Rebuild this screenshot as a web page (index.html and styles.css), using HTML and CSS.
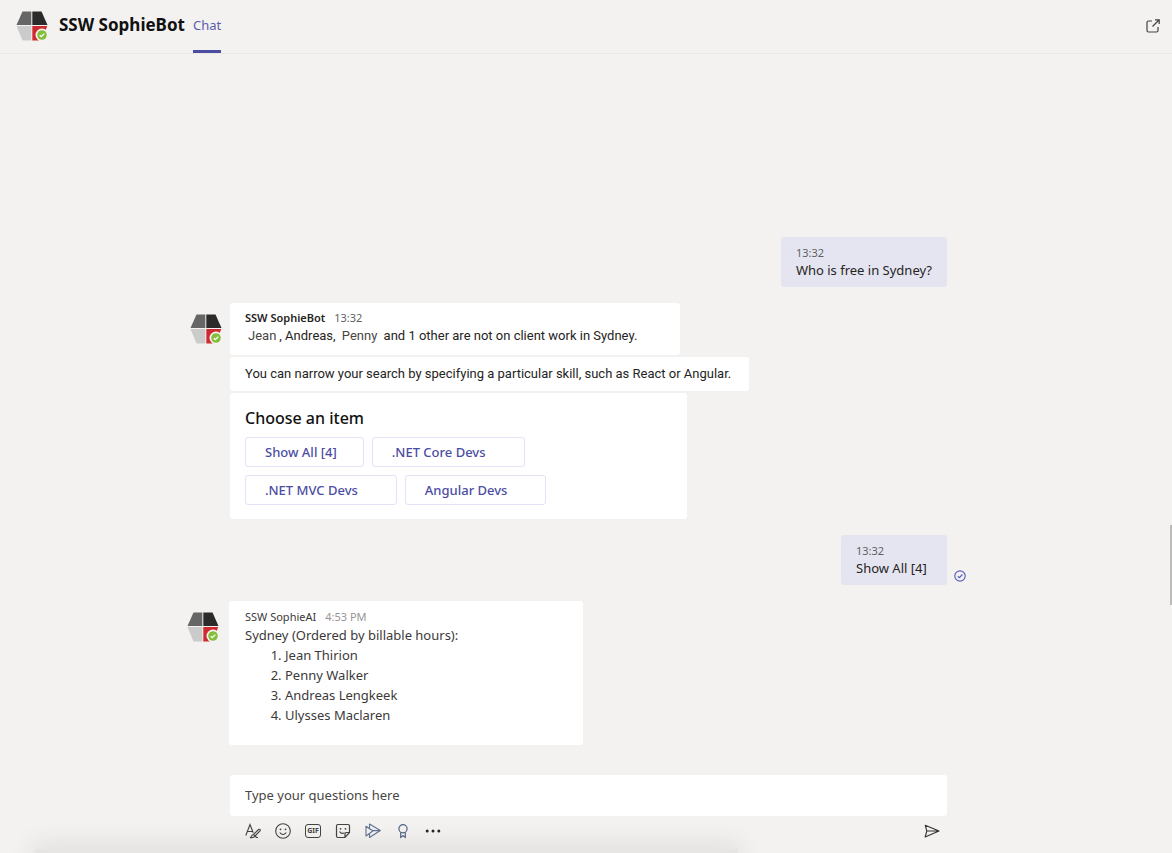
FILE: index.html
```
<!DOCTYPE html>
<html lang="en">
<head>
  <meta charset="UTF-8" />
  <meta name="viewport" content="width=device-width, initial-scale=1.0"/>
  <title>SSW SophieBot</title>
  <link rel="stylesheet" href="styles.css">
</head>
<body>
  <!-- Shared bot logo -->
  <svg class="defs" width="0" height="0" aria-hidden="true">
    <symbol id="bot-logo" viewBox="0 0 32 30">
      <path fill="#666" d="M6.500 .5H15.300V14H.500z"/>
      <path fill="#2b2b2b" d="M16.300 .5H25.500L31.500 14H16.300z"/>
      <path fill="#cbcbcb" d="M.5 15H15.300V29.500H6.500z"/>
      <path fill="#cf2a30" d="M16.300 15H31.200L26 29.500H16.300z"/>
      <circle cx="26" cy="24" r="6.500" fill="#f6f5f4"/>
      <circle cx="26" cy="24" r="4.800" fill="#83bf3c"/>
      <path d="M23.700 24.200l1.600 1.500 3-3.100" fill="none" stroke="#fff" stroke-width="1.300"/>
    </symbol>
  </svg>

  <header class="topbar">
    <svg class="logo" role="img" aria-label="SSW SophieBot"><use href="#bot-logo"/></svg>
    <h1>SSW SophieBot</h1>
    <nav class="tabs">
      <a class="tab" href="#chat">Chat</a>
    </nav>
    <button class="icon-btn popout" aria-label="Pop out chat">
      <svg width="16" height="16" viewBox="0 0 16 16" fill="none" stroke="#424242" stroke-width="1.200">
        <path d="M7 3H3.500Q2 3 2 4.500v8Q2 14 3.500 14h8q1.500 0 1.500-1.500V9"/>
        <path d="M7.500 8.500L14 2M10 1.800h4.200V6"/>
      </svg>
    </button>
  </header>

  <main class="chat" id="chat">
    <div class="row mine">
      <div class="bubble sent">
        <time>13:32</time>
        <p>Who is free in Sydney?</p>
      </div>
    </div>

    <div class="row">
      <svg class="logo avatar" role="img" aria-label="SSW SophieBot"><use href="#bot-logo"/></svg>
      <div class="stack">
        <div class="bubble answer">
          <div class="meta"><strong>SSW SophieBot</strong><time>13:32</time></div>
          <p><span class="person">Jean</span>, Andreas, <span class="person">Penny</span> and 1 other are not on client work in Sydney.</p>
        </div>
        <div class="bubble hint">
          <p>You can narrow your search by specifying a particular skill, such as React or Angular.</p>
        </div>
        <div class="bubble card">
          <h2>Choose an item</h2>
          <div class="choices">
            <button class="choice">Show All [4]</button>
            <button class="choice wide">.NET Core Devs</button>
            <button class="choice wide">.NET MVC Devs</button>
            <button class="choice wide">Angular Devs</button>
          </div>
        </div>
      </div>
    </div>

    <div class="row mine">
      <div class="bubble sent">
        <time>13:32</time>
        <p>Show All [4]</p>
      </div>
      <svg class="receipt" width="12" height="12" viewBox="0 0 12 12" fill="none" stroke="#5b5fc0" stroke-width="1.200" role="img" aria-label="Sent">
        <circle cx="6" cy="6" r="5.200"/>
        <path d="M3.800 6.200l1.600 1.500 3-3.200"/>
      </svg>
    </div>

    <div class="row latest">
      <svg class="logo avatar" role="img" aria-label="SSW SophieAI"><use href="#bot-logo"/></svg>
      <div class="bubble result">
        <div class="meta"><span>SSW SophieAI</span><time>4:53 PM</time></div>
        <p>Sydney (Ordered by billable hours):</p>
        <ol>
          <li>Jean Thirion</li>
          <li>Penny Walker</li>
          <li>Andreas Lengkeek</li>
          <li>Ulysses Maclaren</li>
        </ol>
      </div>
    </div>
  </main>

  <footer class="composer">
    <div class="composer-inner">
      <input type="text" class="message" aria-label="Message" placeholder="Type your questions here" />
      <div class="toolbar">
        <button class="icon-btn" aria-label="Format">
          <svg width="16" height="16" viewBox="0 0 16 16" fill="none" stroke="#424242" stroke-width="1.100">
            <path d="M.8 12.500L5 1.500l3.200 8.300M2.400 8.500h5.200"/>
            <path d="M8.500 11.500l5-5q.8-.6 1.500 0 .6.800 0 1.500l-5 5M8.500 11.500q-1.800.2-2 1.700-.4 1.200-1.500 1.500 4 .6 5-1.700zM10 13l1.500 1.500h1.500"/>
          </svg>
        </button>
        <button class="icon-btn" aria-label="Emoji">
          <svg width="16" height="16" viewBox="0 0 16 16" fill="none" stroke="#424242" stroke-width="1.100">
            <circle cx="8" cy="8" r="7.300"/>
            <path d="M4.700 9.500q3.300 4 6.600 0"/>
            <circle cx="5.500" cy="6.300" r=".9" fill="#424242" stroke="none"/>
            <circle cx="10.500" cy="6.300" r=".9" fill="#424242" stroke="none"/>
          </svg>
        </button>
        <button class="icon-btn gif" aria-label="GIF"><span>GIF</span></button>
        <button class="icon-btn" aria-label="Sticker">
          <svg width="16" height="16" viewBox="0 0 16 16" fill="none" stroke="#424242" stroke-width="1.200">
            <path d="M3 1.500h10q1.500 0 1.500 1.500v6.500L10 14.500H3Q1.500 14.500 1.500 13V3Q1.500 1.500 3 1.500zM14.500 9.500H11.500Q10 9.500 10 11v3.500"/>
            <path d="M4.500 8.500q2 3 5 1.300"/>
            <circle cx="5.500" cy="5.800" r=".9" fill="#424242" stroke="none"/>
            <circle cx="10.500" cy="5.800" r=".9" fill="#424242" stroke="none"/>
          </svg>
        </button>
        <button class="icon-btn" aria-label="Stream">
          <svg width="16" height="16" viewBox="0 0 16 16" fill="none" stroke="#60708f" stroke-width="1.100" stroke-linejoin="round">
            <path d="M4.500 1L15.300 7.500 4.500 14.500V10.500L1 13V3.200l3.500 2.500z"/>
            <path d="M4.500 5.700L8 7.800l-3.500 2.700M8 7.600h7"/>
          </svg>
        </button>
        <button class="icon-btn" aria-label="Praise">
          <svg width="16" height="16" viewBox="0 0 16 16" fill="none" stroke="#506384" stroke-width="1.200">
            <circle cx="8" cy="5.800" r="4.100"/>
            <path d="M5.700 9.300v5L8 12.700l2.300 1.600v-5"/>
          </svg>
        </button>
        <button class="icon-btn" aria-label="More options">
          <svg width="16" height="16" viewBox="0 0 16 16" fill="#242424">
            <circle cx="2.200" cy="8" r="1.500"/><circle cx="8" cy="8" r="1.500"/><circle cx="13.800" cy="8" r="1.500"/>
          </svg>
        </button>
        <button class="icon-btn send" aria-label="Send">
          <svg width="16" height="16" viewBox="0 0 16 16" fill="none" stroke="#333" stroke-width="1.100" stroke-linejoin="round">
            <path d="M1.200 2.200L15 8 1.200 14 2.800 8zM2.800 8H15"/>
          </svg>
        </button>
      </div>
    </div>
  </footer>
  <div class="scroll-thumb"></div>
</body>
</html>
```

FILE: styles.css
```
:root {
  --bg: #f3f2f1;
  --white: #ffffff;
  --text: #252423;
  --muted: #616161;
  --primary: #4b4da3;
  --sent: #e5e5f1;
  --outline: #e3e2f6;
}

* {
  box-sizing: border-box;
}

body {
  display: flex;
  flex-direction: column;
  position: relative;
  min-height: 100vh;
  margin: 0;
  overflow-x: hidden;
  background-color: var(--bg);
  color: var(--text);
  font-family: 'Segoe UI', 'Noto Sans', sans-serif;
  font-size: 13px;
  line-height: 18px;
}

h1, h2, p, ol {
  margin: 0;
}

button, input {
  font-family: inherit;
}

.defs {
  position: absolute;
}

.logo {
  flex: none;
  width: 32px;
  height: 30px;
}

/* Header */
.topbar {
  display: flex;
  align-items: center;
  height: 54px;
  padding: 0 11px 2px 16px;
  border-bottom: 1px solid #e9e8e7;
}

.topbar h1 {
  margin: 0 8px 2px 11px;
  color: #111;
  font-size: 17px;
  font-weight: 700;
  line-height: 24px;
}

.tabs {
  align-self: stretch;
  display: flex;
  margin-bottom: -2px;
}

.tab {
  padding-top: 16px;
  border-bottom: 3px solid var(--primary);
  color: #5b5dab;
  text-decoration: none;
}

.icon-btn {
  display: flex;
  align-items: center;
  justify-content: center;
  width: 16px;
  height: 16px;
  padding: 0;
  border: none;
  background: none;
  cursor: pointer;
}

.popout {
  margin-left: auto;
}

/* Messages */
.chat {
  flex: 1;
  display: flex;
  flex-direction: column;
  justify-content: flex-end;
  gap: 16px;
  padding: 24px 36px 30px 16px;
}

.row {
  display: flex;
  align-items: flex-start;
  width: 100%;
  max-width: 780px;
  margin: 0 auto;
  padding: 0 19px 0 4px;
}

.avatar {
  margin: 11px 8px 0 0;
}

.mine {
  position: relative;
  justify-content: flex-end;
}

.latest {
  padding-left: 1px;
}

.latest .avatar {
  margin-right: 10px;
}

.stack {
  display: flex;
  flex-direction: column;
  align-items: flex-start;
  gap: 2px;
  min-width: 0;
}

.bubble {
  max-width: 100%;
  padding: 8px 15px;
  border-radius: 3px;
  background-color: var(--white);
}

.sent {
  min-width: 106px;
  padding: 7px 15px 8px;
  background-color: var(--sent);
}

.sent time {
  line-height: 17px;
}

.answer p,
.hint p {
  font-family: 'Segoe UI', Roboto, sans-serif;
}

time {
  display: block;
  color: var(--muted);
  font-size: 11px;
}

.meta {
  display: flex;
  gap: 9px;
  font-size: 11px;
}

.meta strong {
  font-weight: 600;
}

.answer {
  width: 450px;
  padding: 6px 15px 10px;
}

.hint {
  padding: 8px 18px 8px 15px;
}

.person {
  padding: 0 3px;
  color: #484644;
}

.card {
  width: 457px;
  padding: 13px 15px 14px;
}

.card h2 {
  margin-bottom: 7px;
  color: #111;
  font-size: 16px;
  font-weight: 500;
  line-height: 24px;
}

.choices {
  display: flex;
  flex-wrap: wrap;
  gap: 8px;
  max-width: 320px;
}

.choice {
  height: 30px;
  padding: 0 26px 1px 19px;
  border: 1px solid var(--outline);
  border-radius: 3px;
  background-color: var(--white);
  color: var(--primary);
  font-size: 13px;
  font-weight: 500;
  cursor: pointer;
}

.choice.wide {
  padding-right: 38px;
}

.receipt {
  position: absolute;
  right: 0;
  bottom: 3px;
}

.result {
  width: 354px;
  padding: 8px 16px 20px;
  color: #3b3a39;
  line-height: 20px;
}

.result .meta {
  line-height: 16px;
}

.result time {
  color: #979593;
}

.result ol {
  padding-left: 40px;
}

/* Message box */
.composer {
  position: relative;
  overflow: hidden;
  padding: 0 36px 14px 16px;
}

.composer::after {
  content: "";
  position: absolute;
  left: 3%;
  right: 37%;
  bottom: -4px;
  height: 8px;
  background-color: #e6e5e4;
  box-shadow: 0 0 24px 4px rgba(0, 0, 0, 0.1);
}

.composer-inner {
  position: relative;
  z-index: 1;
  max-width: 780px;
  margin: 0 auto;
  padding: 0 19px 0 44px;
}

.message {
  display: block;
  width: 100%;
  height: 41px;
  padding: 0 15px 2px;
  border: none;
  border-radius: 3px;
  background-color: var(--white);
  color: var(--text);
  font-size: 13px;
}

.message::placeholder {
  color: #484644;
  opacity: 1;
}

.toolbar {
  display: flex;
  gap: 14px;
  padding: 7px 7px 0 15px;
}

.gif span {
  width: 16px;
  height: 14px;
  border: 1px solid #424242;
  border-radius: 3px;
  color: #424242;
  font-size: 7px;
  font-weight: 700;
  line-height: 12px;
}

.send {
  margin-left: auto;
}

.scroll-thumb {
  position: absolute;
  top: 525px;
  right: 0;
  width: 2px;
  height: 80px;
  background-color: #bdbcbb;
}
```
